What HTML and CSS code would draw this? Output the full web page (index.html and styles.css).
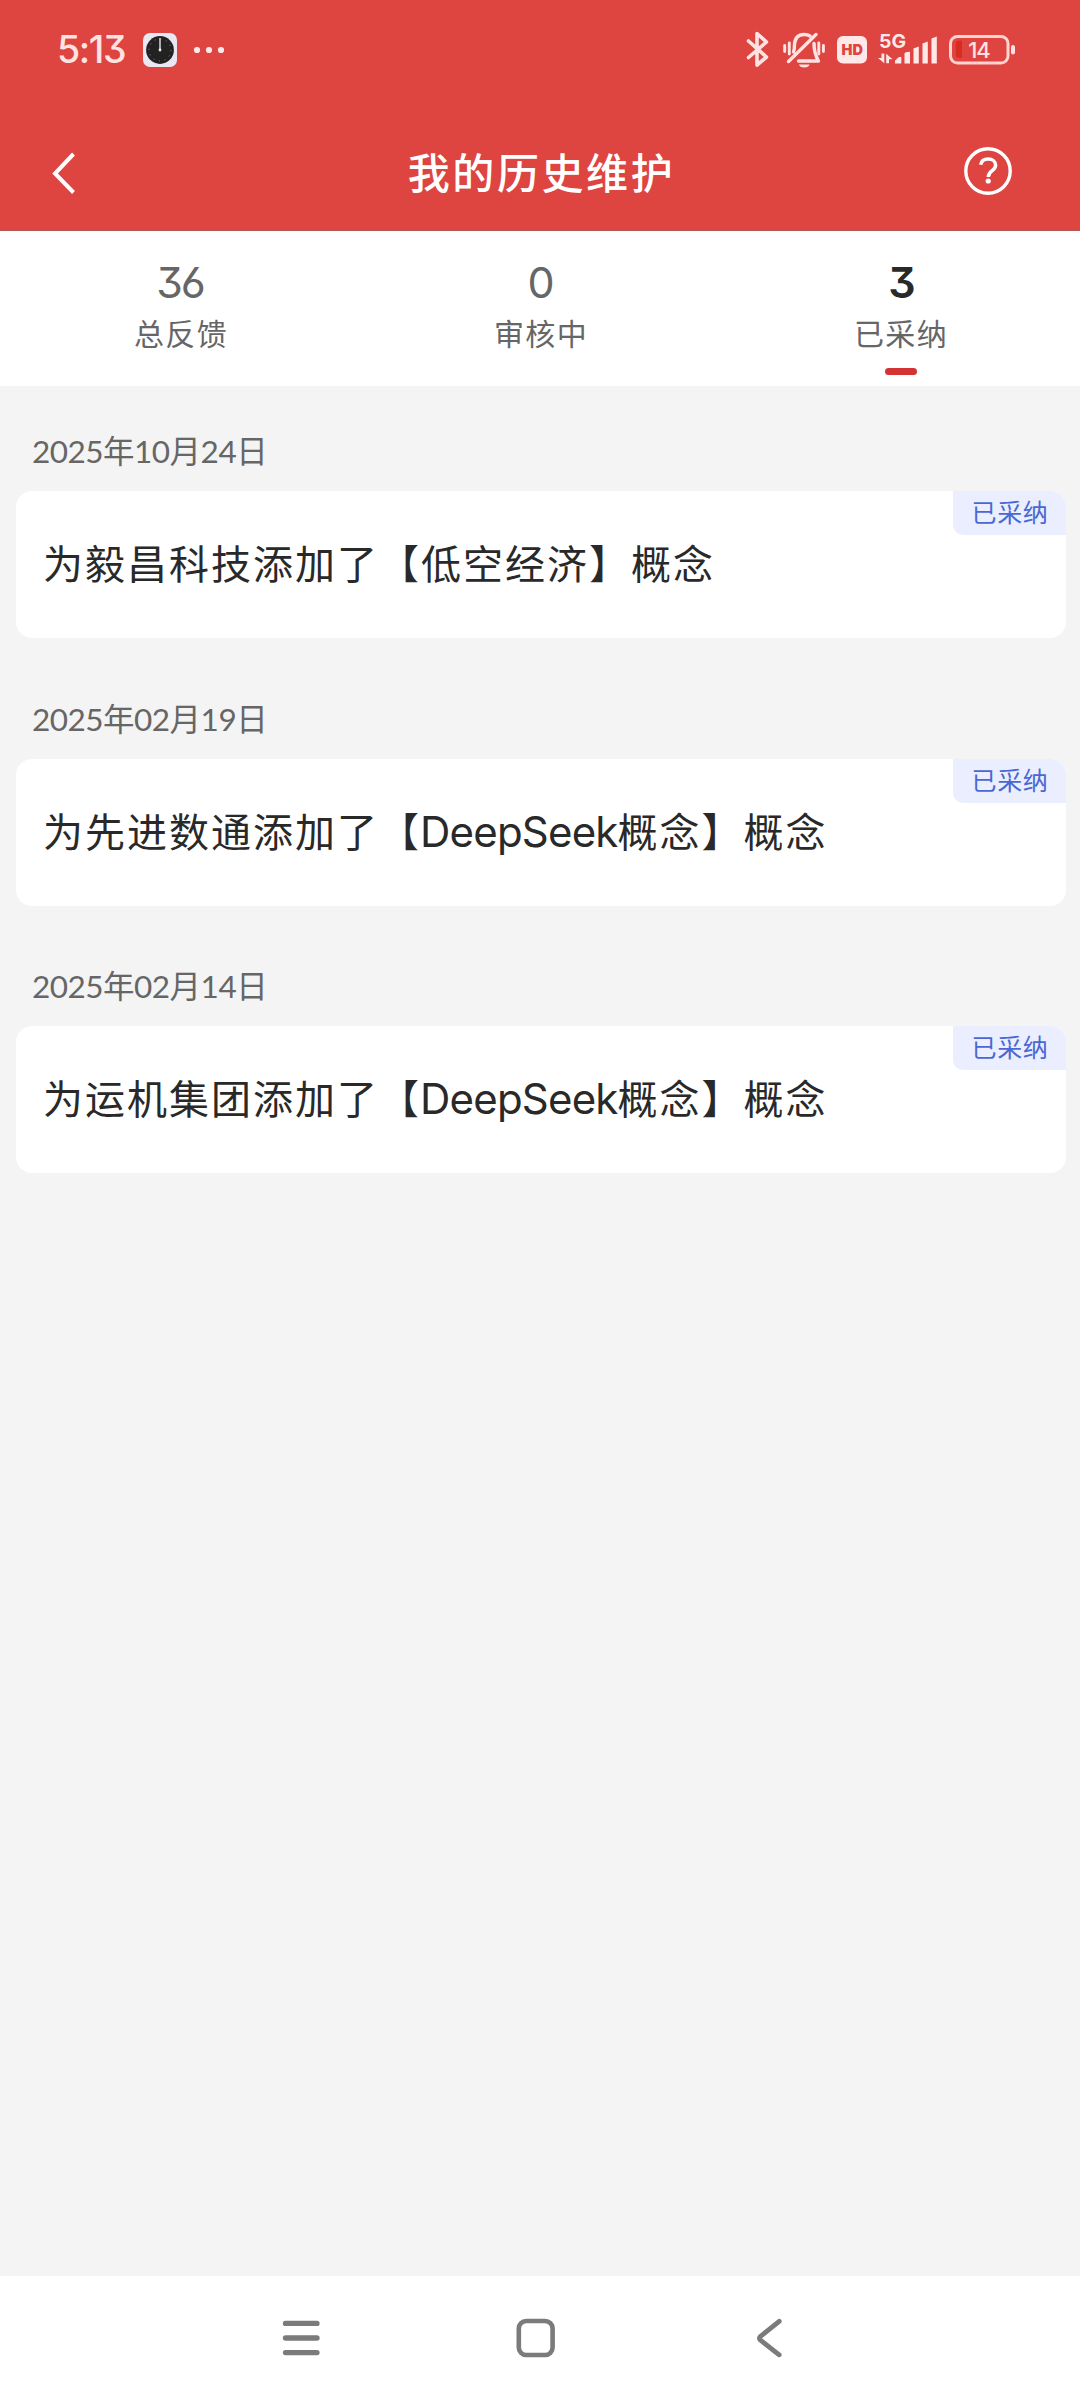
FILE: index.html
```html
<!DOCTYPE html>
<html lang="zh-CN">
<head>
<meta charset="utf-8">
<title>我的历史维护</title>
<link rel="stylesheet" href="styles.css">
</head>
<body>
<div class="screen">
  <header class="header">
    <div class="status">
      <div class="status-left">
        <span class="time">5:13</span>
        <svg class="clock" width="34" height="34" viewBox="0 0 34 34">
          <rect width="34" height="34" rx="7" fill="#e9e8f2"/>
          <circle cx="17" cy="17" r="13.9" fill="#222"/>
          <circle cx="17" cy="17" r="11" fill="none" stroke="#8a8a8a" stroke-width="1" stroke-dasharray="1 4.76"/>
          <path d="M17 5v12" stroke="#bbb" stroke-width="1.8"/>
          <circle cx="17" cy="17" r="1.4" fill="#eee"/>
        </svg>
        <svg class="dots" width="32" height="8" viewBox="0 0 32 8" fill="#ffe9e8">
          <circle cx="4" cy="4" r="3.1"/><circle cx="16" cy="4" r="3.1"/><circle cx="28" cy="4" r="3.1"/>
        </svg>
      </div>
      <div class="status-right">
        <svg width="25" height="40" viewBox="745 30 25 40" fill="none" stroke="#ffe3e2" stroke-width="3.6" stroke-linejoin="round" stroke-linecap="round">
          <path d="M748.5 41 766.5 57 757 65V33.500L766.500 42 748.500 57.500"/>
        </svg>
        <svg class="bell" width="44" height="40" viewBox="782 30 44 40" fill="none" stroke="#ffe3e2" stroke-width="3.4" stroke-linecap="round">
          <path d="M784.700 45.500v6M789.300 43v11M818.800 43v11M823.400 45.500v6" stroke-width="2.900"/>
          <path d="M793.500 52C794.500 49.500 794.500 47 794.500 44.500C795 37.500 799 34.500 804 34.500C806.500 34.500 808.500 35 810 36"/>
          <path d="M788.500 61.500 816 34.500"/>
          <path d="M814 43.500C814 51 815 55 818.500 61H798.500" stroke-linejoin="round"/>
          <path d="M799 64.500H809.500A5.300 3.500 0 0 1 799 64.500Z" fill="#ffe3e2" stroke="none"/>
        </svg>
        <svg class="hd" width="30" height="40" viewBox="837 30 30 40">
          <rect x="837" y="36" width="30" height="27.500" rx="6" fill="#ffe9e8"/>
          <text x="852.300" y="55.300" class="hd-text">HD</text>
        </svg>
        <svg class="signal" width="60" height="40" viewBox="878 30 60 40" fill="#ffe9e8">
          <text x="879" y="48.300" class="net-text" textLength="27" lengthAdjust="spacingAndGlyphs">5G</text>
          <path d="M881.500 53.500h2.800v9.800L878 58h3.500ZM886.200 53.800 892.500 59.300h-3.500v4h-2.800Z"/>
          <path d="M895 63.500v-3l4-3.500h2.300v6.500ZM904.500 63.500v-10q0-1.500 5.500-1.800v11.800ZM913.500 63.500V48.500l5.300-2v17ZM922.500 63.500V43.500l5.300-2v22ZM931.500 63.500V38.500l5.300-2v27Z"/>
        </svg>
        <svg class="battery" width="67" height="40" viewBox="949 30 67 40">
          <rect x="950.500" y="36.500" width="57.500" height="26.500" rx="7" fill="none" stroke="#ffd3d1" stroke-width="3"/>
          <path d="M962 40.500V58H959Q955.800 58 955.800 55V43.500Q955.800 40.500 959 40.500Z" fill="#d92b20"/>
          <rect x="1011" y="45" width="4" height="9.500" rx="2" fill="#ffe3e2"/>
          <text x="979" y="58" class="bat-text">14</text>
        </svg>
      </div>
    </div>
    <div class="titlebar">
      <svg class="back" width="24" height="44" viewBox="0 0 24 44" fill="none" stroke="#fff" stroke-width="4"><path d="M21.500 3 3 22.500 21.500 41.500"/></svg>
      <h1 class="title">我的历史维护</h1>
      <svg class="help" width="50" height="50" viewBox="0 0 50 50" fill="none" stroke="#fff">
        <circle cx="25" cy="25" r="22.200" stroke-width="3.400"/>
        <path d="M17.700 18.800C18.300 15 21 13 25.200 13C29.500 13 32.600 15.600 32.600 19.200C32.600 25 25.400 24.500 25.300 31" stroke-width="3.500"/>
        <circle cx="25.200" cy="35" r="2.600" fill="#fff" stroke="none"/>
      </svg>
    </div>
  </header>

  <nav class="tabs">
    <div class="tab"><span class="count">36</span><span class="label">总反馈</span></div>
    <div class="tab"><span class="count">0</span><span class="label">审核中</span></div>
    <div class="tab tab-active"><span class="count">3</span><span class="label">已采纳</span></div>
  </nav>

  <main class="list">
    <section class="entry">
      <div class="date">2025年10月24日</div>
      <div class="card"><p>为毅昌科技添加了【低空经济】概念</p><span class="badge">已采纳</span></div>
    </section>
    <section class="entry">
      <div class="date">2025年02月19日</div>
      <div class="card"><p>为先进数通添加了【<span class="latin">DeepSeek</span>概念】概念</p><span class="badge">已采纳</span></div>
    </section>
    <section class="entry">
      <div class="date">2025年02月14日</div>
      <div class="card"><p>为运机集团添加了【<span class="latin">DeepSeek</span>概念】概念</p><span class="badge">已采纳</span></div>
    </section>
  </main>

  <footer class="navbar">
    <svg width="40" height="44" viewBox="0 0 40 44" fill="none" stroke="#7b7b7b" stroke-width="5.300" stroke-linecap="round"><path d="M4.500 7.400h31.500M4.500 22h31.500M4.500 36.600h31.500"/></svg>
    <svg width="40" height="44" viewBox="0 0 40 44" fill="none" stroke="#7b7b7b" stroke-width="4.600"><rect x="3.800" y="5" width="33.800" height="34" rx="7.500"/></svg>
    <svg width="40" height="44" viewBox="0 0 40 44" fill="none" stroke="#7b7b7b" stroke-width="4.800" stroke-linecap="round" stroke-linejoin="round"><path d="M30.200 5.300 11.500 20.300Q9.300 22.200 11.500 24.200L30.200 38.800"/></svg>
  </footer>
</div>
</body>
</html>
```

FILE: styles.css
```css
* {
  box-sizing: border-box;
}

body {
  margin: 0;
  background: #f4f4f4;
  font-family: Lato, "Noto Sans CJK SC", sans-serif;
}

.screen {
  width: 1080px;
  height: 2400px;
  display: flex;
  flex-direction: column;
}

.header {
  height: 231px;
  background: #de4440;
  border-bottom: 1px solid #b05653;
}

.status {
  height: 100px;
  padding: 0 64px 0 57px;
  display: flex;
  align-items: center;
  justify-content: space-between;
}

.status-left,
.status-right {
  display: flex;
  align-items: center;
}

.time {
  width: 86px;
  color: #ffe3e2;
  font-family: Inter, sans-serif;
  font-feature-settings: "cv09";
  font-size: 37.5px;
  font-weight: 500;
  line-height: 40px;
  letter-spacing: -1.4px;
}

.dots {
  margin-left: 16px;
}

.bell {
  margin-left: 12px;
}

.hd,
.signal,
.battery {
  margin-left: 11px;
}

.hd-text {
  fill: #de4440;
  font: 900 14.5px Inter, sans-serif;
  text-anchor: middle;
}

.net-text {
  font: 700 19px Inter, sans-serif;
}

.bat-text {
  fill: #ffe3e2;
  font: 500 22px Inter, sans-serif;
  letter-spacing: -1px;
  text-anchor: middle;
}

.titlebar {
  height: 130px;
  padding: 15px 67px 0 52px;
  display: grid;
  grid-template-columns: 50px 1fr 50px;
  align-items: center;
}

.help {
  margin-bottom: 3px;
}

.title {
  margin: 0;
  padding-left: 18px;
  color: #fff;
  font-size: 42px;
  font-weight: 500;
  line-height: 60px;
  letter-spacing: 2.6px;
  text-align: center;
}

.tabs {
  height: 155px;
  background: #fff;
  display: grid;
  grid-template-columns: repeat(3, 1fr);
}

.tab {
  padding: 27px 0 0 2px;
  display: flex;
  flex-direction: column;
  align-items: center;
  color: #666;
}

.count {
  margin-right: 2px;
  font-family: Inter, sans-serif;
  font-feature-settings: "cv03", "cv09";
  font-size: 43px;
  line-height: 49px;
  letter-spacing: -2px;
}

.label {
  font-size: 30px;
  line-height: 52px;
  letter-spacing: 1.3px;
}

.tab-active .count {
  margin-right: 0;
  color: #292929;
  font-weight: 600;
}

.tab-active::after {
  content: "";
  width: 32px;
  height: 7px;
  margin-top: 9px;
  border-radius: 4px;
  background: #d43333;
}

.list {
  flex: 1;
  padding: 0 14px 0 16px;
}

.entry {
  height: 267.500px;
}

.date {
  height: 105px;
  padding: 42px 0 0 16px;
  color: #666;
  font-size: 31.500px;
  line-height: 46px;
  letter-spacing: -0.500px;
}

.card {
  position: relative;
  height: 147px;
  padding: 0 0 1px 27px;
  display: flex;
  align-items: center;
  border-radius: 16px;
  background: #fff;
  overflow: hidden;
}

.card p {
  margin: 0;
  color: #292929;
  font-size: 40px;
  line-height: 60px;
  letter-spacing: 2px;
}

.latin {
  margin-left: -1px;
  font-family: Inter, sans-serif;
  font-size: 42px;
  letter-spacing: -0.800px;
}

.badge {
  position: absolute;
  top: 0;
  right: 0;
  width: 113px;
  height: 44px;
  padding-left: 1px;
  border-bottom-left-radius: 10px;
  background: #eaeefe;
  color: #4a68d4;
  font-size: 25px;
  line-height: 43px;
  letter-spacing: 0.7px;
  text-align: center;
}

.navbar {
  height: 124px;
  padding-left: 281px;
  background: #fff;
  display: flex;
  align-items: center;
  gap: 194px;
}
```
